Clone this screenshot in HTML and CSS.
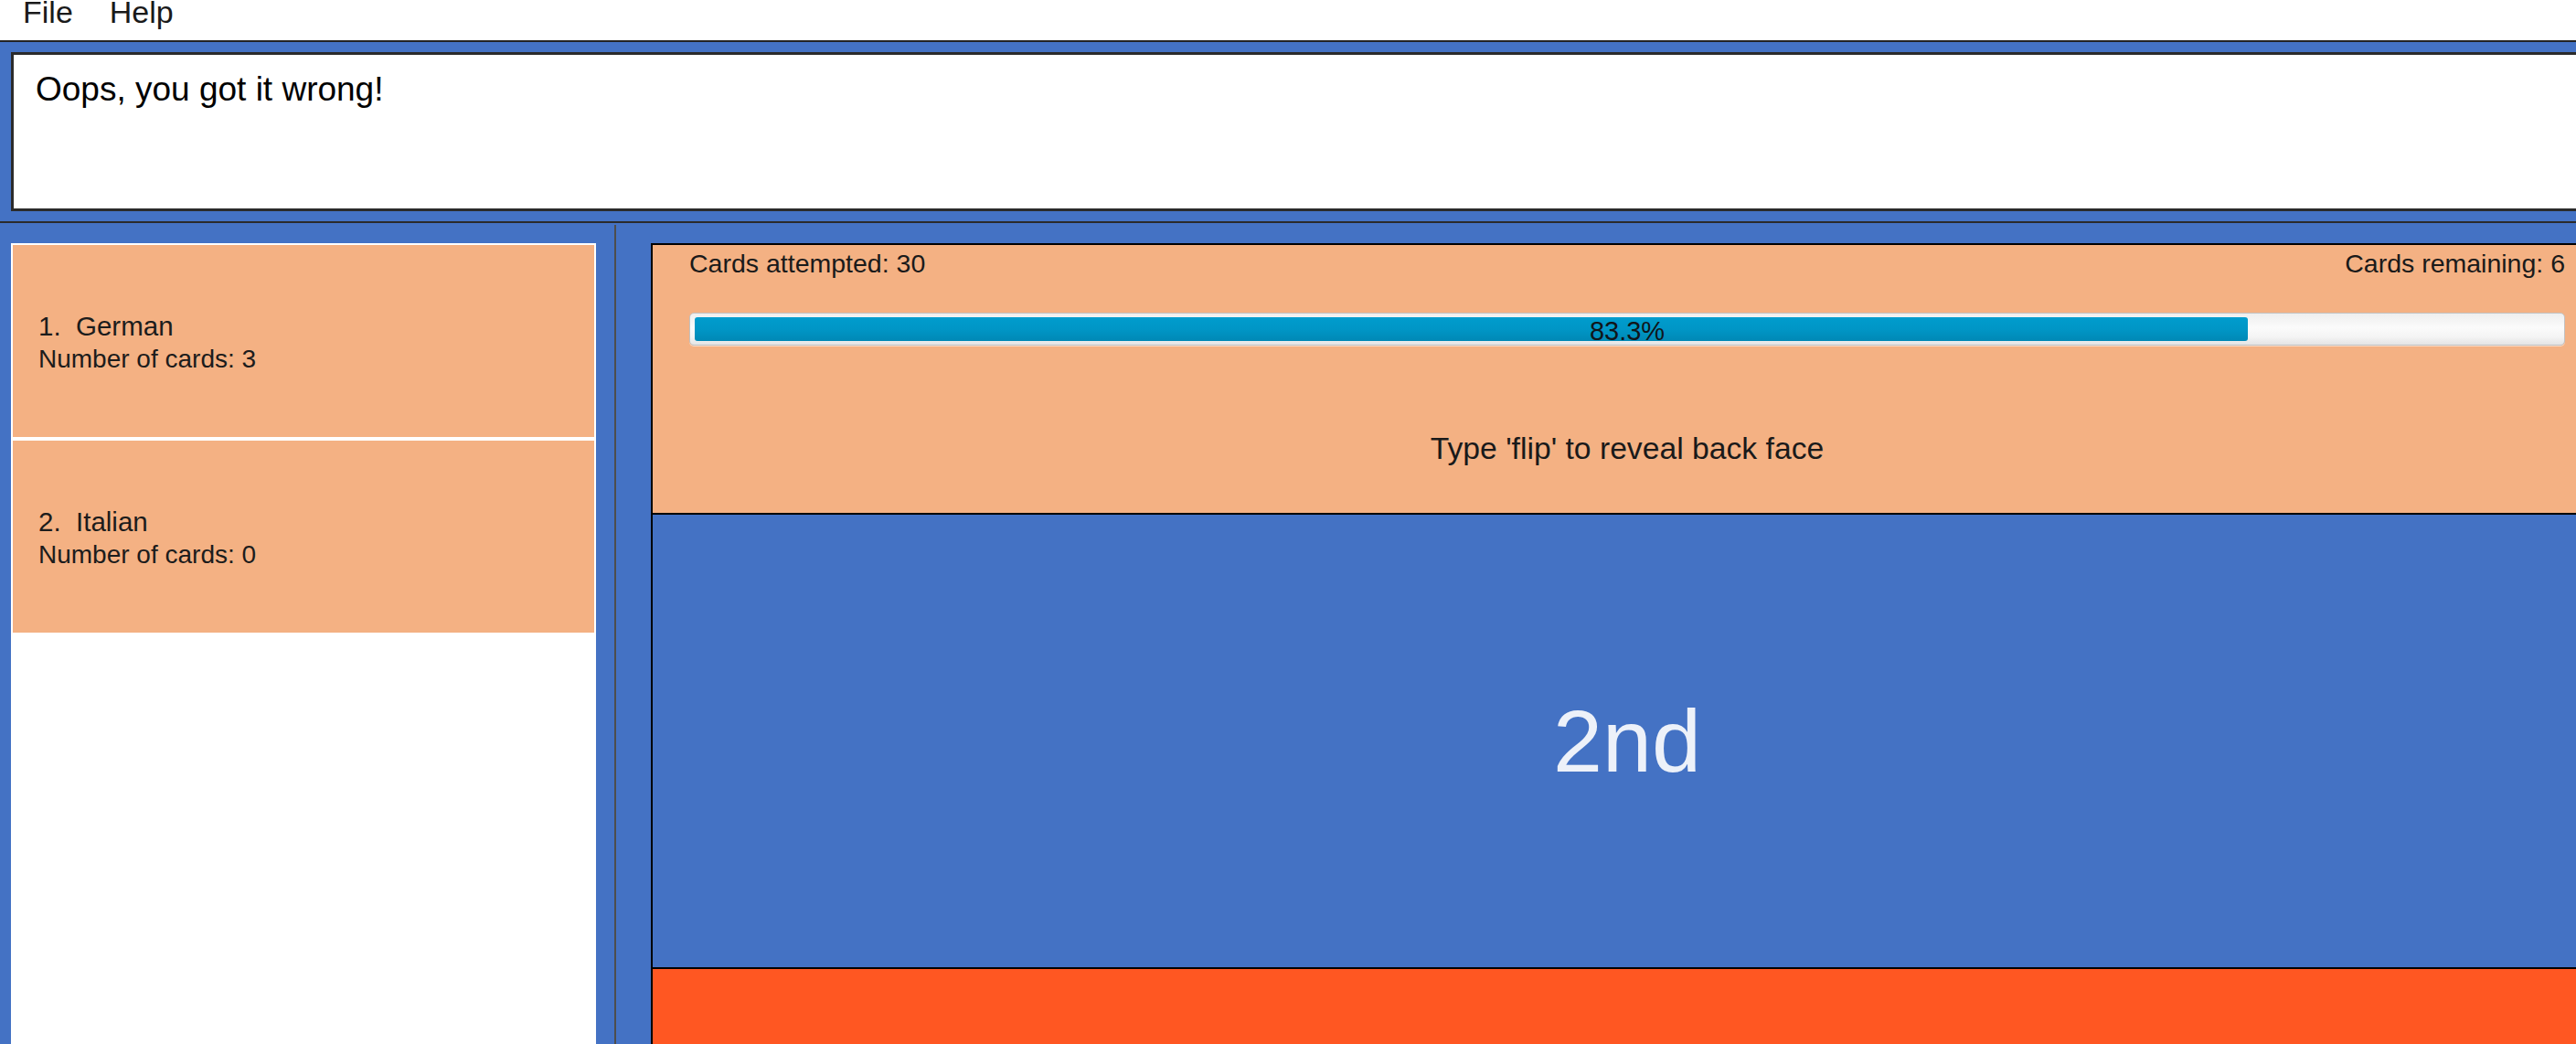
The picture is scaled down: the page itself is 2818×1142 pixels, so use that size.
FILE: index.html
```html
<!DOCTYPE html>
<html lang="en">
<head>
<meta charset="utf-8">
<title>Flashcards</title>
<link rel="stylesheet" href="styles.css">
</head>
<body>
<div class="app">
  <nav class="menubar">
    <span class="menu-item">File</span>
    <span class="menu-item">Help</span>
  </nav>

  <section class="result-area">
    <div class="result-box">Oops, you got it wrong!</div>
  </section>

  <main class="main">
    <aside class="list-col">
      <div class="deck-list">
        <div class="deck-card">
          <div class="deck-name">1.  German</div>
          <div class="deck-count">Number of cards: 3</div>
        </div>
        <div class="deck-card">
          <div class="deck-name">2.  Italian</div>
          <div class="deck-count">Number of cards: 0</div>
        </div>
      </div>
    </aside>

    <div class="divider"></div>

    <section class="study-col">
      <div class="study-panel">
        <div class="progress-section">
          <div class="stats">
            <span>Cards attempted: 30</span>
            <span>Cards remaining: 6</span>
          </div>
          <div class="progress">
            <div class="progress-fill" style="width:83.3%"></div>
            <span class="progress-label">83.3%</span>
          </div>
          <p class="hint">Type 'flip' to reveal back face</p>
        </div>
        <div class="card-face"><span class="card-text">2nd</span></div>
        <div class="answer-area"></div>
      </div>
    </section>
  </main>
</div>
</body>
</html>
```

FILE: styles.css
```css
html, body {
  margin: 0;
  padding: 0;
  overflow: hidden;
}

body {
  width: 2818px;
  height: 1142px;
  background: #ffffff;
  font-family: "Liberation Sans", Arial, sans-serif;
  color: #1a1a1a;
}

.app {
  display: flex;
  flex-direction: column;
  height: 1142px;
  overflow: hidden;
}

/* menu bar */
.menubar {
  flex: none;
  height: 44px;
  display: flex;
  align-items: flex-start;
  padding-left: 5px;
  background: #ffffff;
  border-bottom: 2px solid #232323;
}

.menu-item {
  font-size: 34px;
  line-height: 26px;
  padding: 0 20px;
  color: #1a1a1a;
}

/* result display */
.result-area {
  flex: none;
  background: #4472c4;
  padding: 11px 0 11px 12px;
  border-bottom: 2px solid #2b2b2b;
}

.result-box {
  height: 152px;
  margin-right: -60px;
  background: #ffffff;
  border: 3px solid #2b2b2b;
  padding: 16px 24px 0;
  font-size: 37px;
  line-height: 43px;
  color: #000000;
  box-sizing: content-box;
}

/* main area */
.main {
  flex: 1;
  min-height: 0;
  display: flex;
  background: #4472c4;
  overflow: hidden;
}

.list-col {
  flex: none;
  width: 640px;
  padding: 22px 0 0 12px;
  display: flex;
  flex-direction: column;
}

.deck-list {
  flex: 1;
  background: #ffffff;
  padding: 2px;
  display: flex;
  flex-direction: column;
  gap: 4px;
}

.deck-card {
  height: 210px;
  box-sizing: border-box;
  padding: 70px 0 0 28px;
  background: #f4b183;
  color: #1c1c1c;
}

.deck-name {
  font-size: 29.5px;
  line-height: 37px;
  white-space: pre;
}

.deck-count {
  font-size: 28px;
  line-height: 36px;
}

.divider {
  flex: none;
  width: 2px;
  margin: 2px 38px 0 20px;
  background: #4d4d4d;
}

.study-col {
  flex: none;
  width: 2136px;
  padding-top: 22px;
  display: flex;
  flex-direction: column;
}

.study-panel {
  flex: 1;
  display: flex;
  flex-direction: column;
  border: 2px solid #000000;
  border-bottom: none;
}

.progress-section {
  flex: none;
  height: 293px;
  box-sizing: border-box;
  padding: 3px 40px 0;
  background: #f4b183;
}

.stats {
  display: flex;
  justify-content: space-between;
  font-size: 28.5px;
  line-height: 34px;
  color: #1a1a1a;
}

.progress {
  position: relative;
  margin-top: 37px;
  padding: 4px 5px;
  border: 1px solid #c2c2c2;
  border-radius: 5px;
  background: linear-gradient(#eeeeee, #fbfbfb 45%, #f4f4f4 75%, #e4e4e4);
  box-shadow: 0 1px 0 rgba(255, 255, 255, 0.55);
}

.progress-fill {
  height: 26px;
  border-radius: 3px;
  background: linear-gradient(#009ccd, #0096c6 50%, #0088b5);
}

.progress-label {
  position: absolute;
  left: 0;
  right: 0;
  top: 2px;
  bottom: 0;
  text-align: center;
  font-size: 29px;
  line-height: 34px;
  color: #10151a;
}

.hint {
  margin: 92px 0 0;
  text-align: center;
  font-size: 33.7px;
  line-height: 40px;
  color: #1a1a1a;
}

.card-face {
  flex: none;
  height: 495px;
  border-top: 2px solid #000000;
  background: #4472c4;
  display: flex;
  align-items: center;
  justify-content: center;
}

.card-text {
  font-size: 97px;
  color: #edf1f9;
}

.answer-area {
  flex: 1;
  border-top: 2px solid #000000;
  background: #ff5722;
}
```
